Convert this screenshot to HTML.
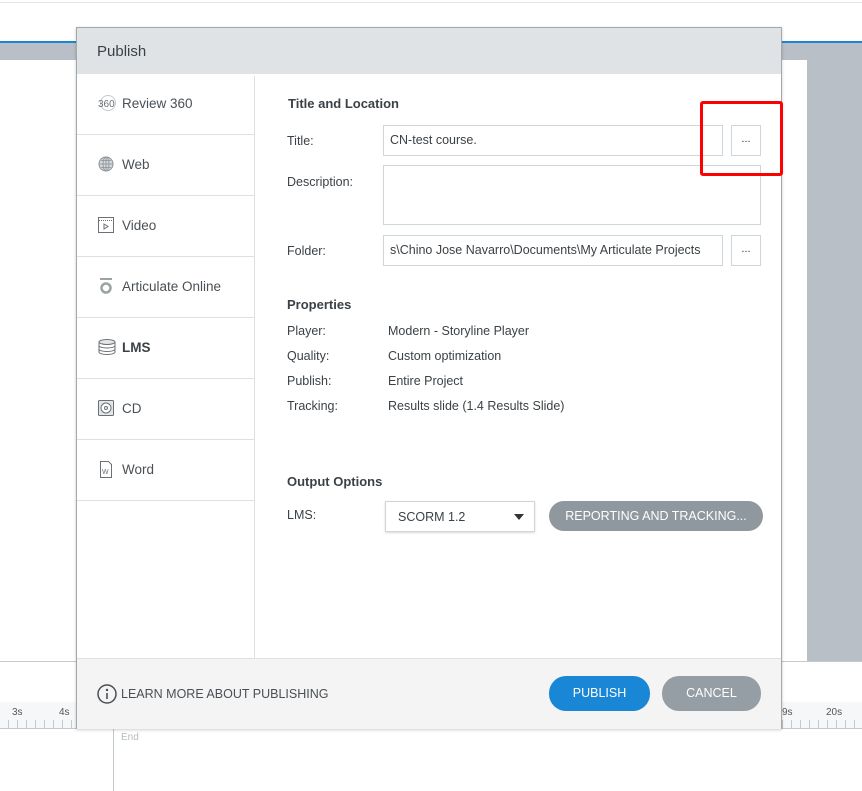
<!DOCTYPE html>
<html><head><style>
*{box-sizing:border-box;margin:0;padding:0}
body{width:862px;height:791px;position:relative;overflow:hidden;background:#fff;font-family:"Liberation Sans",sans-serif;color:#3b4145;font-size:13px}
.a{position:absolute}
.sb{position:absolute;left:0;width:177px;height:61px;border-bottom:1px solid #dde1e4}
.sb span{position:absolute;left:45px;top:22px;font-size:13.5px;color:#4a5055}
.sb svg{position:absolute;left:21px;top:21px}
.lab{position:absolute;left:210px;font-size:12.5px;color:#3b4145}
.val{position:absolute;left:311px;font-size:12.5px}
.inp{position:absolute;border:1px solid #cfd6da;background:#fff}
.dots{position:absolute;width:30px;height:31px;border:1px solid #cfd6da;font-size:11px;text-align:center;line-height:26px;color:#333}
</style></head><body>
<div class="a" style="left:0;top:2px;width:862px;height:1px;background:#e3e6e8"></div>
<div class="a" style="left:0;top:41px;width:862px;height:2px;background:#1a86d6"></div>
<div class="a" style="left:0;top:43px;width:862px;height:17px;background:#b9bfc6"></div>
<div class="a" style="left:807px;top:43px;width:55px;height:618px;background:#b9bfc6"></div>
<div class="a" style="left:0;top:661px;width:862px;height:1px;background:#c5cacf"></div>
<div class="a" style="left:0;top:702px;width:862px;height:27px;background:#f6f7f8"></div>
<div class="a" style="left:12px;top:707px;font-size:10px;color:#555">3s</div>
<div class="a" style="left:59px;top:707px;font-size:10px;color:#555">4s</div>
<div class="a" style="left:782px;top:707px;font-size:10px;color:#555">9s</div>
<div class="a" style="left:826px;top:707px;font-size:10px;color:#555">20s</div>
<div class="a" style="left:0;top:720px;width:862px;height:8px;background:repeating-linear-gradient(90deg,transparent 0 8px,#c5cacf 8px 9px)"></div>
<div class="a" style="left:0;top:728px;width:862px;height:1px;background:#c5cacf"></div>
<div class="a" style="left:113px;top:729px;width:1px;height:62px;background:#c5cacf"></div>
<div class="a" style="left:121px;top:732px;font-size:10px;color:#b5bcc2">End</div>

<div class="a" style="left:76px;top:27px;width:706px;height:702px;background:#fff;border:1px solid #a3a8ac;box-shadow:0 1px 3px rgba(0,0,0,.2)">
 <div class="a" style="left:0;top:0;width:704px;height:46px;background:#dfe3e6"></div>
 <div class="a" style="left:20px;top:15px;font-size:15px;color:#3b4145">Publish</div>
 <div class="a" style="left:177px;top:48px;width:1px;height:582px;background:#dde1e4"></div>
 <div class="a" style="left:0;top:46px;width:177px">
  <div class="sb" style="top:0"><svg width="20" height="16"><circle cx="10" cy="8" r="7.5" fill="none" stroke="#c5cacd"/><text x="0" y="12" font-size="10" fill="#6a7076" font-family="Liberation Sans">360</text></svg><span>Review 360</span></div>
  <div class="sb" style="top:61px"><svg width="16" height="16"><circle cx="8" cy="8" r="7" fill="#d3d7da" stroke="#8b9196"/><path d="M1 8h14M8 1v14M3 4.5h10M3 11.5h10" stroke="#8b9196" fill="none" stroke-width=".8"/><ellipse cx="8" cy="8" rx="3" ry="7" fill="none" stroke="#8b9196" stroke-width=".8"/></svg><span>Web</span></div>
  <div class="sb" style="top:122px"><svg width="16" height="16"><rect x=".5" y=".5" width="15" height="15" fill="#fff" stroke="#6a7076"/><path d="M1 3.5h14" stroke="#6a7076" stroke-dasharray="1 1"/><path d="M6 7l4 2.5-4 2.5z" fill="none" stroke="#6a7076"/></svg><span>Video</span></div>
  <div class="sb" style="top:183px"><svg width="16" height="16"><rect x="2" y="0" width="12" height="2" fill="#9aa5a0"/><circle cx="8" cy="10" r="4.5" fill="none" stroke="#9aa5a0" stroke-width="2.5"/></svg><span>Articulate Online</span></div>
  <div class="sb" style="top:244px"><svg width="18" height="16"><g fill="#e3e6e8" stroke="#6a7076"><ellipse cx="9" cy="3" rx="8" ry="2.5"/><path d="M1 3v10c0 1.5 3.5 2.5 8 2.5s8-1 8-2.5V3M1 6.5c0 1.5 3.5 2.5 8 2.5s8-1 8-2.5M1 10c0 1.5 3.5 2.5 8 2.5s8-1 8-2.5" fill="none"/></g></svg><span style="font-weight:bold;color:#3b4145">LMS</span></div>
  <div class="sb" style="top:305px"><svg width="16" height="16"><rect x=".5" y=".5" width="15" height="15" rx="1" fill="#e3e6e8" stroke="#6a7076"/><circle cx="8" cy="8" r="5" fill="#fff" stroke="#6a7076"/><circle cx="8" cy="8" r="1.5" fill="none" stroke="#6a7076"/></svg><span>CD</span></div>
  <div class="sb" style="top:366px"><svg width="16" height="17"><path d="M2.5.5h8l3 3v13h-11z" fill="#fff" stroke="#6a7076"/><text x="4" y="13" font-size="7" fill="#6a7076" font-family="Liberation Sans">W</text></svg><span>Word</span></div>
 </div>
 <div class="a" style="left:211px;top:68px;font-size:13px;font-weight:bold;color:#3b4145">Title and Location</div>
 <div class="lab" style="top:106px">Title:</div>
 <div class="inp" style="left:306px;top:97px;width:340px;height:31px"><span class="a" style="left:6px;top:7px;font-size:12.5px">CN-test course.</span></div>
 <div class="dots" style="left:654px;top:97px">...</div>
 <div class="lab" style="top:147px">Description:</div>
 <div class="inp" style="left:306px;top:137px;width:378px;height:60px"></div>
 <div class="lab" style="top:216px">Folder:</div>
 <div class="inp" style="left:306px;top:207px;width:340px;height:31px;overflow:hidden"><span class="a" style="left:6px;top:7px;font-size:12.5px;white-space:nowrap">s\Chino Jose Navarro\Documents\My Articulate Projects</span></div>
 <div class="dots" style="left:654px;top:207px">...</div>
 <div class="a" style="left:210px;top:269px;font-size:13px;font-weight:bold">Properties</div>
 <div class="lab" style="top:296px">Player:</div><div class="val" style="top:296px">Modern - Storyline Player</div>
 <div class="lab" style="top:321px">Quality:</div><div class="val" style="top:321px">Custom optimization</div>
 <div class="lab" style="top:346px">Publish:</div><div class="val" style="top:346px">Entire Project</div>
 <div class="lab" style="top:371px">Tracking:</div><div class="val" style="top:371px">Results slide (1.4 Results Slide)</div>
 <div class="a" style="left:210px;top:446px;font-size:13px;font-weight:bold">Output Options</div>
 <div class="lab" style="top:480px">LMS:</div>
 <div class="inp" style="left:308px;top:473px;width:150px;height:31px;box-shadow:0 1px 2px rgba(0,0,0,.15)"><span class="a" style="left:12px;top:8px;font-size:12.5px">SCORM 1.2</span><svg class="a" style="left:128px;top:12px" width="10" height="6"><path d="M0 0h10L5 6z" fill="#333"/></svg></div>
 <div class="a" style="left:472px;top:473px;width:214px;height:30px;border-radius:15px;background:#8f989f;color:#fff;font-size:12.5px;text-align:center;line-height:30px">REPORTING AND TRACKING...</div>
 <div class="a" style="left:0;top:630px;width:704px;height:71px;background:#f4f4f4;border-top:1px solid #dde1e4"></div>
 <svg class="a" style="left:20px;top:656px" width="20" height="20"><circle cx="10" cy="10" r="9" fill="none" stroke="#4a5055" stroke-width="1.5"/><circle cx="10" cy="6" r="1.2" fill="#4a5055"/><path d="M10 9v6" stroke="#4a5055" stroke-width="1.6"/></svg>
 <div class="a" style="left:44px;top:659px;font-size:12.5px;color:#4a5055">LEARN MORE ABOUT PUBLISHING</div>
 <div class="a" style="left:472px;top:648px;width:101px;height:35px;border-radius:17px;background:#1a86d6;color:#fff;font-size:12.5px;text-align:center;line-height:35px">PUBLISH</div>
 <div class="a" style="left:585px;top:648px;width:99px;height:35px;border-radius:17px;background:#959ea5;color:#fff;font-size:12.5px;text-align:center;line-height:35px">CANCEL</div>
</div>
<div class="a" style="left:700px;top:101px;width:83px;height:75px;border:3px solid #f00;border-radius:3px"></div>
</body></html>
